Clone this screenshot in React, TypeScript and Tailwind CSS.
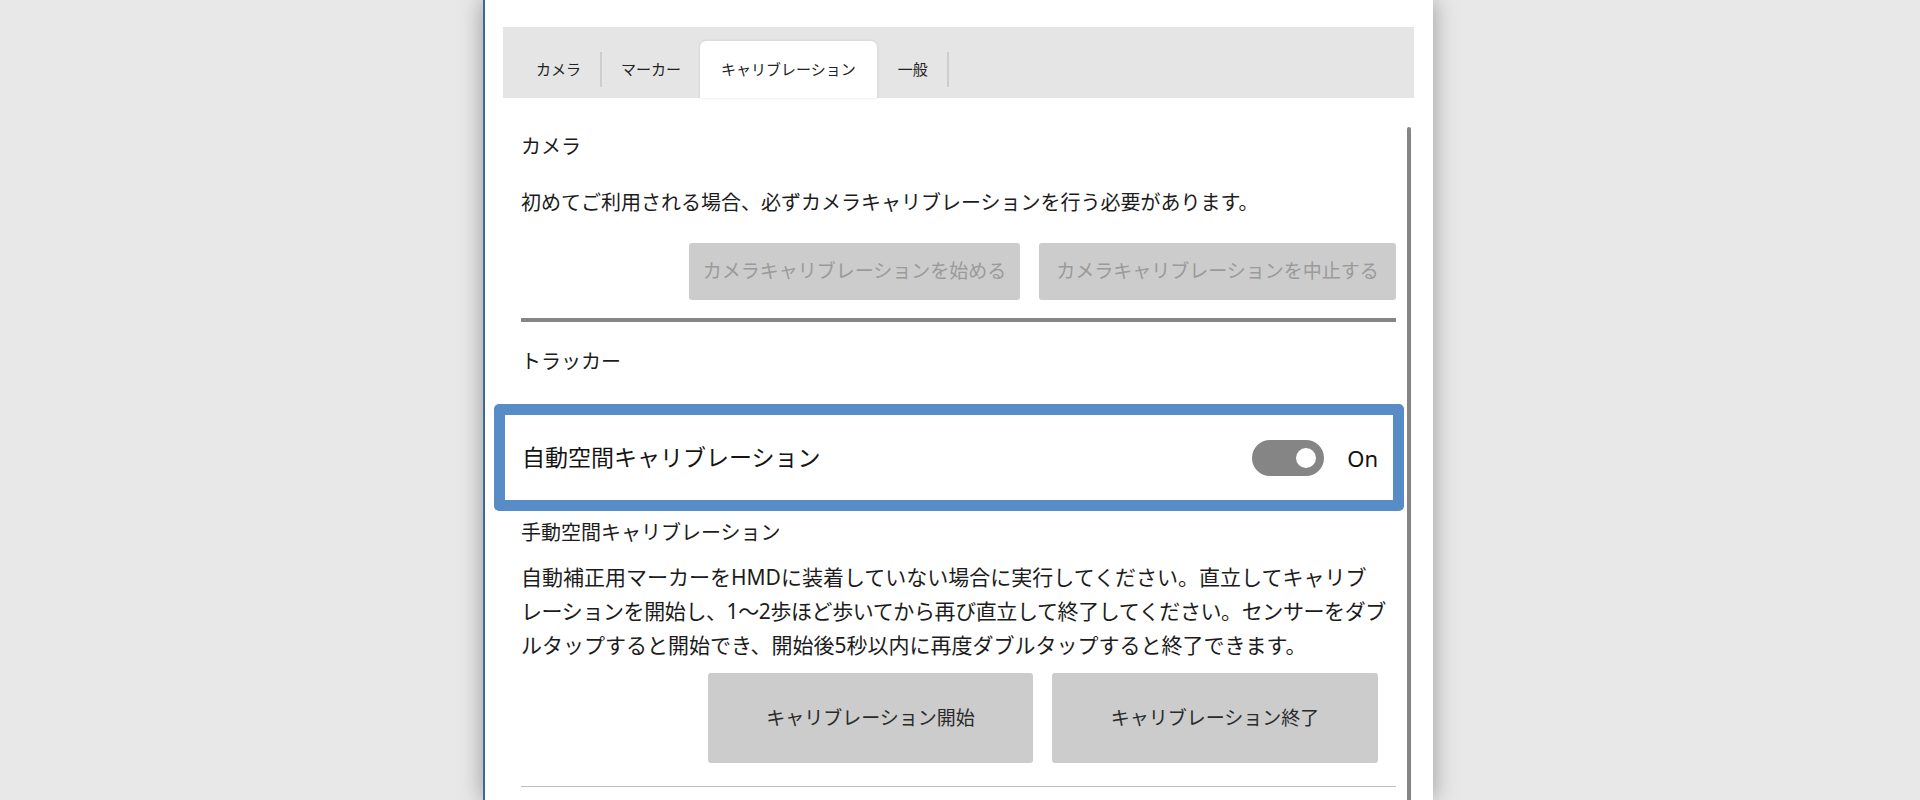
import React from "react";

const font = { fontFamily: '"Noto Sans", "Noto Sans CJK JP", sans-serif' };

function Tabs() {
  const Sep = () => (
    <div className="h-[57px] flex items-center">
      <div className="w-[2px] h-[35px] bg-[#cdcdcd]" />
    </div>
  );
  return (
    <div className="shrink-0 ml-[18px] w-[911px] h-[71px] mt-[27px] bg-[#e5e5e5] flex items-end pl-[14px] text-[15px] text-[#222]">
      <div className="h-[57px] flex items-center px-[19px]">カメラ</div>
      <Sep />
      <div className="h-[57px] flex items-center px-[19px]">マーカー</div>
      <div className="h-[57px] flex items-center px-[21px] bg-white rounded-t-[6px] shadow-[0_0_3px_rgba(0,0,0,0.12)]">キャリブレーション</div>
      <div className="h-[57px] flex items-center px-[19px] ml-[2px]">一般</div>
      <Sep />
    </div>
  );
}

function Toggle({ on }: { on: boolean }) {
  return (
    <div className="flex items-center gap-[23px]">
      <div className="w-[72px] h-[36px] rounded-full bg-[#858585] flex items-center justify-end pr-[8px]">
        <div className="w-[20px] h-[20px] rounded-full bg-white" />
      </div>
      <span className="text-[22px] text-[#111] leading-none">{on ? "On" : "Off"}</span>
    </div>
  );
}

export default function App() {
  return (
    <div className="w-[1920px] h-[800px] bg-[#e8e8e8] overflow-hidden flex" style={font}>
      <div className="ml-[483px] w-[950px] h-full bg-white border-l-2 border-[#3d6a93] shadow-[0_0_22px_rgba(0,0,0,0.35)] flex flex-col overflow-hidden">
        <Tabs />
        <div className="flex flex-1 pl-[36px] min-h-0">
          <div className="w-[875px] shrink-0 text-[#1c1c1c]">
            <h2 className="mt-[34px] text-[20px] leading-[30px]">カメラ</h2>
            <p className="mt-[26px] text-[20px] leading-[30px] whitespace-nowrap">初めてご利用される場合、必ずカメラキャリブレーションを行う必要があります。</p>
            <div className="mt-[25px] flex justify-end gap-[19px]">
              <button className="w-[331px] h-[57px] rounded-[3px] bg-[#cccccc] text-[#9a9a9a] text-[19px]">カメラキャリブレーションを始める</button>
              <button className="w-[357px] h-[57px] rounded-[3px] bg-[#cccccc] text-[#9a9a9a] text-[19px]">カメラキャリブレーションを中止する</button>
            </div>
            <div className="mt-[18px] h-[4px] bg-[#858585]" />

            <h2 className="mt-[25px] text-[20px] leading-[30px]">トラッカー</h2>
            <div className="mt-[27px] -ml-[27px] -mr-[8px] h-[107px] border-[11px] border-[#578cc7] rounded-[5px] flex items-center justify-between pl-[17px] pr-[15px]">
              <span className="text-[23px] leading-none text-[#151515]">自動空間キャリブレーション</span>
              <Toggle on />
            </div>

            <h3 className="mt-[7px] text-[20px] leading-[30px]">手動空間キャリブレーション</h3>
            <div className="mt-[12px] text-[21px] leading-[34px] whitespace-nowrap">
              <p>自動補正用マーカーをHMDに装着していない場合に実行してください。直立してキャリブ</p>
              <p className="tracking-[-0.4px]">レーションを開始し、1〜2歩ほど歩いてから再び直立して終了してください。センサーをダブ</p>
              <p>ルタップすると開始でき、開始後5秒以内に再度ダブルタップすると終了できます。</p>
            </div>
            <div className="mt-[11px] flex justify-end gap-[19px] pr-[18px]">
              <button className="w-[325px] h-[90px] rounded-[3px] bg-[#cccccc] text-[#2a2a2a] text-[19px]">キャリブレーション開始</button>
              <button className="w-[326px] h-[90px] rounded-[3px] bg-[#cccccc] text-[#2a2a2a] text-[19px]">キャリブレーション終了</button>
            </div>
            <div className="mt-[23px] h-px bg-[#bdbdbd]" />
          </div>
          <div className="shrink-0 ml-[11px] mt-[29px] w-[4px] bg-[#858585] rounded-t-full" />
        </div>
      </div>
    </div>
  );
}
